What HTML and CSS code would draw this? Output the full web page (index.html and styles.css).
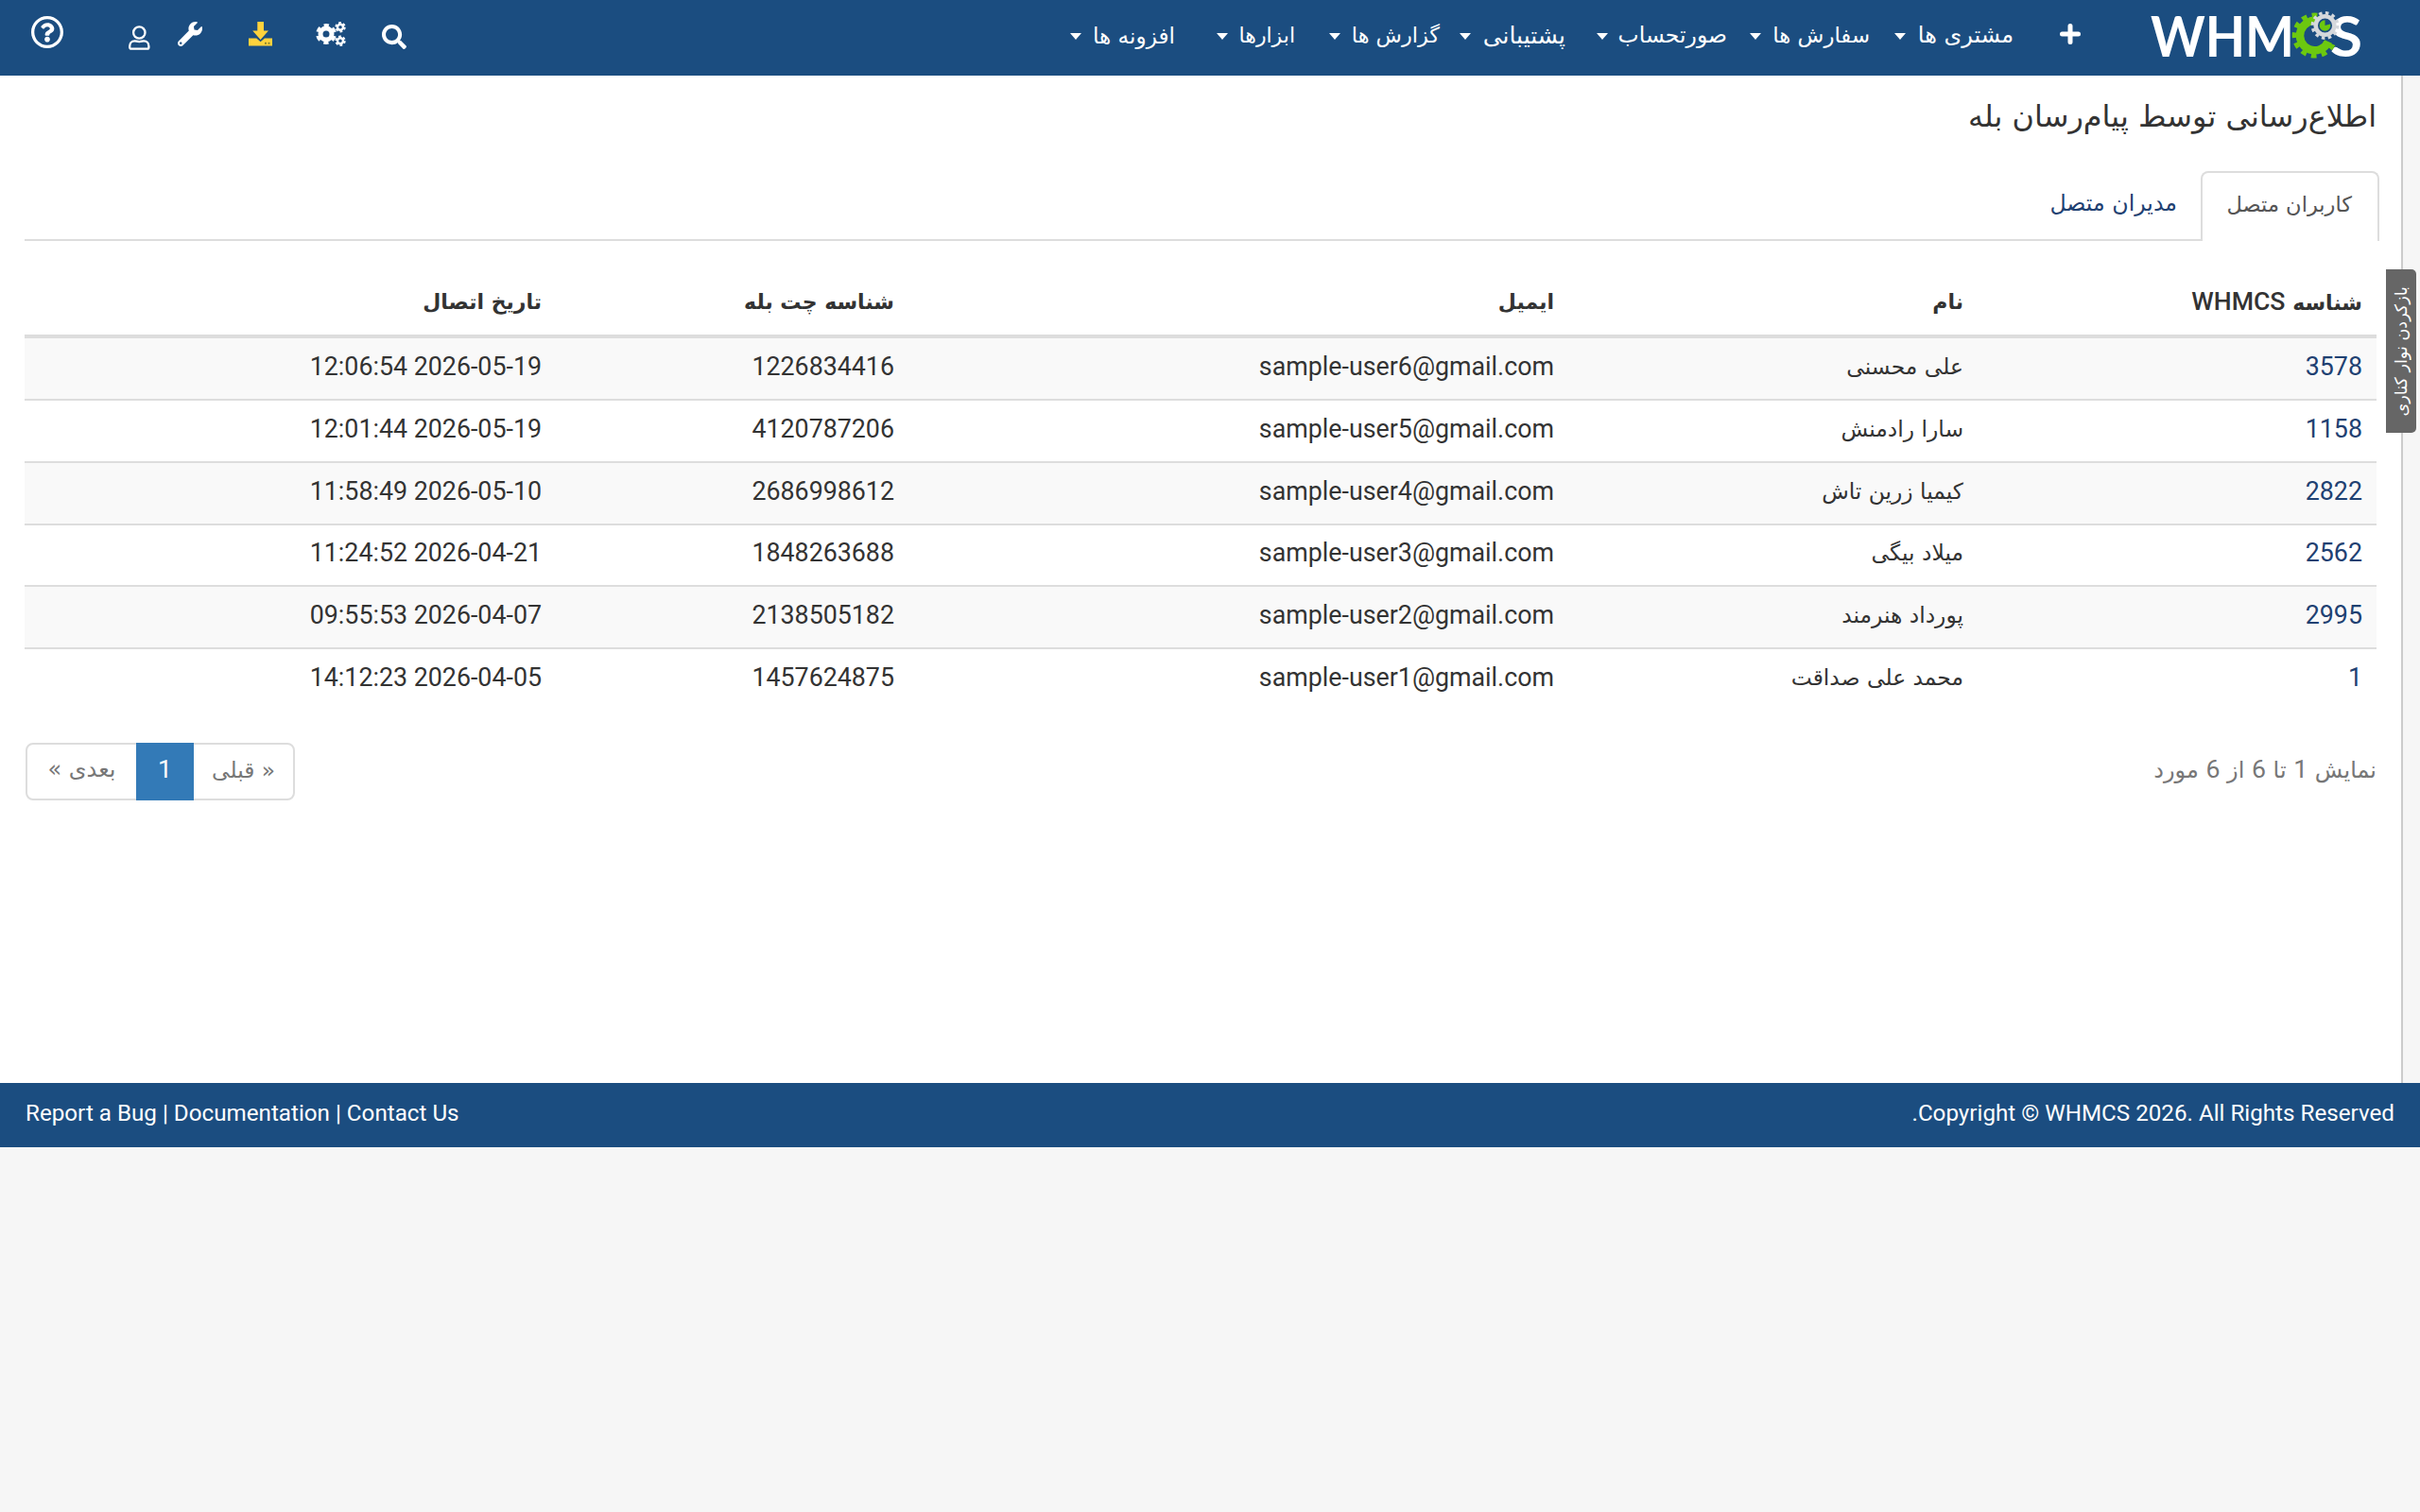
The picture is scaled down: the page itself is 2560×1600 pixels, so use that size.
FILE: index.html
```
<!DOCTYPE html>
<html lang="fa" dir="rtl">
<head>
    <meta charset="UTF-8">
    <meta name="viewport" content="width=device-width, initial-scale=1.0">
    <title>WHMCS</title>
    <link rel="stylesheet" href="styles.css">
</head>
<body>
    <header class="topbar">
        <svg class="logo" viewBox="-4 -10 232 80" width="232" height="80">
            <g class="logo-text">
                <text x="0" y="50" textLength="152" lengthAdjust="spacingAndGlyphs">WHM</text>
                <text x="190" y="50" textLength="34" lengthAdjust="spacingAndGlyphs">S</text>
            </g>
            <!-- green gear -->
            <g fill="none" stroke="#6cc80f">
                <path d="M188 34 A 15.700 15.700 0 1 1 178 12.500" stroke-width="8.500"/>
                <path d="M193 37 A 21.500 21.500 0 1 1 178 6.500" stroke-width="5" stroke-dasharray="5.600 5.400"/>
            </g>
            <!-- small gear -->
            <circle cx="184.500" cy="17" r="9" fill="#1b4d80"/>
            <circle cx="184.500" cy="17" r="5.800" fill="#6cc80f"/>
            <path d="M184.500 17 L184.500 10 L191.500 10 L191.500 15Z" fill="#1b4d80"/>
            <circle cx="184.500" cy="17" r="9.800" fill="none" stroke="#d5d8dc" stroke-width="4.500"/>
            <circle cx="184.500" cy="17" r="13.200" fill="none" stroke="#d5d8dc" stroke-width="3.400" stroke-dasharray="3.500 3.412"/>
        </svg>
        <svg class="icon icon-plus" viewBox="0 0 22 22" width="22" height="22"><path d="M11 2.500v17M2.500 11h17" stroke="#fff" stroke-width="5" stroke-linecap="round"/></svg>
        <nav class="menu">
            <a class="menu-item customers">مشتری ها</a>
            <a class="menu-item orders">سفارش ها</a>
            <a class="menu-item billing">صورتحساب</a>
            <a class="menu-item support">پشتیبانی</a>
            <a class="menu-item reports">گزارش ها</a>
            <a class="menu-item utilities">ابزارها</a>
            <a class="menu-item addons">افزونه ها</a>
        </nav>
        <div class="tools">
            <svg class="icon icon-help" viewBox="8 8 496 496" width="34" height="34"><path d="M256 8C119.043 8 8 119.083 8 256c0 136.997 111.043 248 248 248s248-111.003 248-248C504 119.083 392.957 8 256 8zm0 448c-110.532 0-200-89.431-200-200 0-110.495 89.472-200 200-200 110.491 0 200 89.471 200 200 0 110.530-89.431 200-200 200zm107.244-255.200c0 67.052-72.421 68.084-72.421 92.863V300c0 6.627-5.373 12-12 12h-45.647c-6.627 0-12-5.373-12-12v-8.659c0-35.745 27.100-50.034 47.579-61.516 17.561-9.845 28.324-16.541 28.324-29.579 0-17.246-21.999-28.693-39.784-28.693-23.189 0-33.894 10.977-48.942 29.969-4.057 5.120-11.460 6.071-16.666 2.124l-27.824-21.098c-5.107-3.872-6.251-11.066-2.644-16.363C184.846 131.491 214.940 112 261.794 112c49.071 0 101.450 38.304 101.450 88.800zM298 368c0 23.159-18.841 42-42 42s-42-18.841-42-42 18.841-42 42-42 42 18.841 42 42z"/></svg>
            <svg class="icon icon-user" viewBox="0 0 23 26" width="23" height="26"><g fill="none" stroke="#fff" stroke-width="2.300"><circle cx="11.300" cy="7.500" r="6.200"/><path d="M6.500 16.300c1.700 0 2.500.8 4.800.8s3.100-.8 4.800-.8c3.300 0 5.300 2.600 5.300 5.600v1.100c0 1-.6 1.700-1.600 1.700h-17c-1 0-1.600-.7-1.600-1.700v-1.100c0-3 2-5.600 5.300-5.600z"/></g></svg>
            <svg class="icon icon-wrench" viewBox="0 0 512 512" width="26" height="26"><path d="M507.730 109.100c-2.240-9.030-13.540-12.090-20.120-5.510l-74.360 74.360-67.880-11.310-11.310-67.880 74.360-74.360c6.620-6.620 3.430-17.900-5.660-20.160-47.380-11.740-99.550.91-136.580 37.930-39.640 39.640-50.550 97.100-34.050 147.200L18.740 402.760c-24.990 24.990-24.990 65.510 0 90.500 24.990 24.990 65.510 24.990 90.500 0l213.210-213.210c50.120 16.710 107.470 5.680 147.370-34.220 37.070-37.070 49.700-89.320 37.910-136.730zM64 472c-13.250 0-24-10.750-24-24 0-13.260 10.750-24 24-24s24 10.740 24 24c0 13.250-10.750 24-24 24z"/></svg>
            <svg class="icon icon-download" viewBox="0 0 25 26" width="25" height="26"><path d="M9.300 0h6.700v9.500h5l-8.400 9.500-8.400-9.500h5.100z"/><path d="M0 17.500h8.300l4.300 3.800 4.300-3.800H25v8H0z"/><path d="M17 21.800h2v2h-2zM20.500 21.800h2v2h-2z" fill="#8a8730"/></svg>
            <svg class="icon icon-cogs" viewBox="0 0 32 26" width="32" height="26"><g fill="none" stroke="#fff"><circle cx="11" cy="13" r="6" stroke-width="5"/><circle cx="11" cy="13" r="9.200" stroke-width="3.400" stroke-dasharray="5.200 4.434" stroke-dashoffset="-2.200"/><circle cx="26" cy="5.700" r="3" stroke-width="2.400"/><circle cx="26" cy="5.700" r="4.700" stroke-width="2" stroke-dasharray="2.700 2.222"/><circle cx="26" cy="20.200" r="3" stroke-width="2.400"/><circle cx="26" cy="20.200" r="4.700" stroke-width="2" stroke-dasharray="2.700 2.222"/></g></svg>
            <svg class="icon icon-search" viewBox="0 0 512 512" width="26" height="26"><path d="M505 442.700L405.300 343c-4.500-4.500-10.600-7-17-7H372c27.600-35.300 44-79.700 44-128C416 93.100 322.900 0 208 0S0 93.100 0 208s93.100 208 208 208c48.300 0 92.700-16.400 128-44v16.300c0 6.400 2.500 12.500 7 17l99.700 99.700c9.400 9.400 24.600 9.400 33.900 0l28.300-28.300c9.400-9.400 9.400-24.600.1-34zM208 336c-70.700 0-128-57.200-128-128 0-70.700 57.200-128 128-128 70.700 0 128 57.200 128 128 0 70.700-57.200 128-128 128z"/></svg>
        </div>
    </header>

    <a class="sidebar-opener"><span>بازکردن نوار کناری</span></a>

    <main class="content">
        <h1>اطلاع‌رسانی توسط پیام‌رسان بله</h1>

        <div class="tabs">
            <a class="tab active">کاربران متصل</a>
            <a class="tab">مدیران متصل</a>
        </div>

        <table class="users">
            <thead>
                <tr>
                    <th>شناسه <span class="en">WHMCS</span></th>
                    <th>نام</th>
                    <th>ایمیل</th>
                    <th>شناسه چت بله</th>
                    <th>تاریخ اتصال</th>
                </tr>
            </thead>
            <tbody>
                <tr>
                    <td><a>3578</a></td>
                    <td class="name">علی محسنی</td>
                    <td>sample-user6@gmail.com</td>
                    <td>1226834416</td>
                    <td><bdi dir="ltr">12:06:54 2026-05-19</bdi></td>
                </tr>
                <tr>
                    <td><a>1158</a></td>
                    <td class="name">سارا رادمنش</td>
                    <td>sample-user5@gmail.com</td>
                    <td>4120787206</td>
                    <td><bdi dir="ltr">12:01:44 2026-05-19</bdi></td>
                </tr>
                <tr>
                    <td><a>2822</a></td>
                    <td class="name">کیمیا زرین تاش</td>
                    <td>sample-user4@gmail.com</td>
                    <td>2686998612</td>
                    <td><bdi dir="ltr">11:58:49 2026-05-10</bdi></td>
                </tr>
                <tr>
                    <td><a>2562</a></td>
                    <td class="name">میلاد بیگی</td>
                    <td>sample-user3@gmail.com</td>
                    <td>1848263688</td>
                    <td><bdi dir="ltr">11:24:52 2026-04-21</bdi></td>
                </tr>
                <tr>
                    <td><a>2995</a></td>
                    <td class="name">پورداد هنرمند</td>
                    <td>sample-user2@gmail.com</td>
                    <td>2138505182</td>
                    <td><bdi dir="ltr">09:55:53 2026-04-07</bdi></td>
                </tr>
                <tr>
                    <td><a>1</a></td>
                    <td class="name">محمد علی صداقت</td>
                    <td>sample-user1@gmail.com</td>
                    <td>1457624875</td>
                    <td><bdi dir="ltr">14:12:23 2026-04-05</bdi></td>
                </tr>
            </tbody>
        </table>

        <div class="table-footer">
            <div class="info">نمایش <span class="en">1</span> تا <span class="en">6</span> از <span class="en">6</span> مورد</div>
            <div class="pagination">
                <span class="page prev">« قبلی</span>
                <span class="page active">1</span>
                <span class="page next">بعدی »</span>
            </div>
        </div>
    </main>

    <footer class="footer">
        <div>Copyright © WHMCS 2026. All Rights Reserved.</div>
        <div dir="ltr"><a>Report a Bug</a> | <a>Documentation</a> | <a>Contact Us</a></div>
    </footer>
</body>
</html>
```
FILE: styles.css
```
* {
    box-sizing: border-box;
}
body {
    margin: 0;
    background-color: #f6f6f6;
    color: #333;
    font-family: Roboto, "DejaVu Sans", sans-serif;
    font-size: 26.8px;
    line-height: 38px;
}
.topbar {
    display: flex;
    align-items: flex-start;
    height: 80px;
    padding: 0 57px 0 33px;
    background-color: #1b4d80;
    color: #fff;
}
.logo {
    margin-left: 70px;
    direction: ltr;
}
.logo-text {
    fill: #fff;
    font-family: Lato, sans-serif;
    font-size: 60px;
    font-weight: bold;
}
.icon {
    fill: #fff;
}
.icon-plus {
    margin-top: 25px;
    margin-left: 49px;
}
.menu {
    display: flex;
}
.menu-item {
    display: flex;
    justify-content: space-between;
    height: 75px;
    padding-left: 26px;
    font-family: "DejaVu Sans", sans-serif;
    line-height: 75px;
    white-space: nowrap;
}
.menu-item::after {
    content: "";
    margin-top: 35px;
    border: 6.5px solid transparent;
    border-top: 7px solid #fff;
    border-bottom: 0;
    height: 0;
}
.customers {
    width: 152px;
    font-size: 24px;
}
.orders {
    width: 151px;
    padding-left: 24px;
    font-size: 22.8px;
}
.billing {
    width: 171px;
    padding-left: 33px;
    font-size: 23.5px;
}
.support {
    width: 133px;
    padding-left: 21px;
    font-size: 25px;
}
.reports {
    width: 153px;
    padding-left: 36px;
    font-size: 22.4px;
}
.utilities {
    width: 127px;
    padding-left: 44px;
    font-size: 22px;
}
.addons {
    width: 111px;
    padding-left: 0;
    font-size: 23.2px;
}
.tools {
    display: flex;
    align-items: flex-start;
    direction: ltr;
    margin-right: auto;
}
.icon-help {
    margin-top: 17px;
}
.icon-user {
    margin: 27px 0 0 69px;
}
.icon-wrench {
    margin: 23px 0 0 29px;
}
.icon-download {
    margin: 23px 0 0 49px;
    fill: #ffd23c;
}
.icon-cogs {
    margin: 23px 0 0 46px;
}
.icon-search {
    margin: 26px 0 0 38px;
}
/* sits over the page edge */
.sidebar-opener {
    position: absolute;
    top: 285px;
    right: 4px;
    display: flex;
    align-items: center;
    justify-content: center;
    width: 32px;
    height: 173px;
    border-radius: 0 5px 5px 0;
    background-color: #666;
    color: #fff;
}
.sidebar-opener span {
    writing-mode: vertical-rl;
    transform: rotate(180deg);
    font-family: "DejaVu Sans", sans-serif;
    font-size: 17.6px;
    line-height: 32px;
    white-space: nowrap;
}
.content {
    height: 1066px;
    margin-right: 18px;
    padding: 21px 26px 0 26px;
    border-right: 2px solid #ccc;
    background-color: #fff;
}
h1 {
    margin: 0 0 36px 0;
    font-family: "DejaVu Sans", sans-serif;
    font-size: 31.9px;
    font-weight: normal;
    line-height: 44px;
}
.tabs {
    display: flex;
    height: 74px;
    margin-right: -3px;
    border-bottom: 2px solid #ddd;
}
.tab {
    height: 74px;
    padding: 0 25px;
    font-family: "DejaVu Sans", sans-serif;
    font-size: 23.7px;
    line-height: 69px;
    white-space: nowrap;
    color: #1f4172;
}
.tab.active {
    width: 189px;
    padding: 0 27px;
    border: 2px solid #ddd;
    border-bottom: 0;
    border-radius: 8px 8px 0 0;
    background-color: #fff;
    font-size: 22.5px;
    line-height: 66px;
    color: #555;
}
.users {
    display: block;
    margin-top: 34px;
}
.users thead,
.users tbody {
    display: block;
}
.users tr {
    display: grid;
    grid-template-columns: 422px 433px 698px 373px 1fr;
    align-items: center;
    height: 65.75px;
    padding-bottom: 4px;
    border-top: 2px solid #ddd;
}
.users thead tr {
    height: 69px;
    padding-bottom: 3px;
    border-top: 0;
    border-bottom: 4px solid #ddd;
}
.users tbody tr:first-child {
    height: 64px;
    border-top: 0;
}
.users tbody tr:nth-child(odd) {
    background-color: #f9f9f9;
}
.users th,
.users td {
    padding: 0 15px;
    text-align: right;
}
.users th {
    font-family: "DejaVu Sans", sans-serif;
    font-size: 22px;
    font-weight: bold;
}
.users .name {
    font-family: "DejaVu Sans", sans-serif;
    font-size: 23.4px;
}
.users a {
    color: #1f4172;
}
.en {
    font-family: Roboto, sans-serif;
    font-size: 26.67px;
}
th .en {
    font-weight: 500;
}
.table-footer {
    display: flex;
    justify-content: space-between;
    margin-top: 35px;
    color: #777;
    font-family: "DejaVu Sans", sans-serif;
    font-size: 24px;
}
.info {
    padding-top: 9px;
}
.pagination {
    display: flex;
    height: 61px;
    margin-left: 1px;
    border: 2px solid #ddd;
    border-radius: 8px;
    line-height: 53px;
}
.page {
    text-align: center;
}
.page.prev {
    width: 105px;
    font-size: 23.3px;
}
.page.active {
    width: 61px;
    margin: -2px 0;
    background-color: #337ab7;
    color: #fff;
    font-family: Roboto, sans-serif;
    font-size: 26.67px;
    line-height: 57px;
}
.page.next {
    width: 115px;
}
.footer {
    display: flex;
    justify-content: space-between;
    height: 68px;
    padding: 0 27px;
    background-color: #1b4d80;
    color: #fff;
    font-size: 24.2px;
    line-height: 65px;
}
```
